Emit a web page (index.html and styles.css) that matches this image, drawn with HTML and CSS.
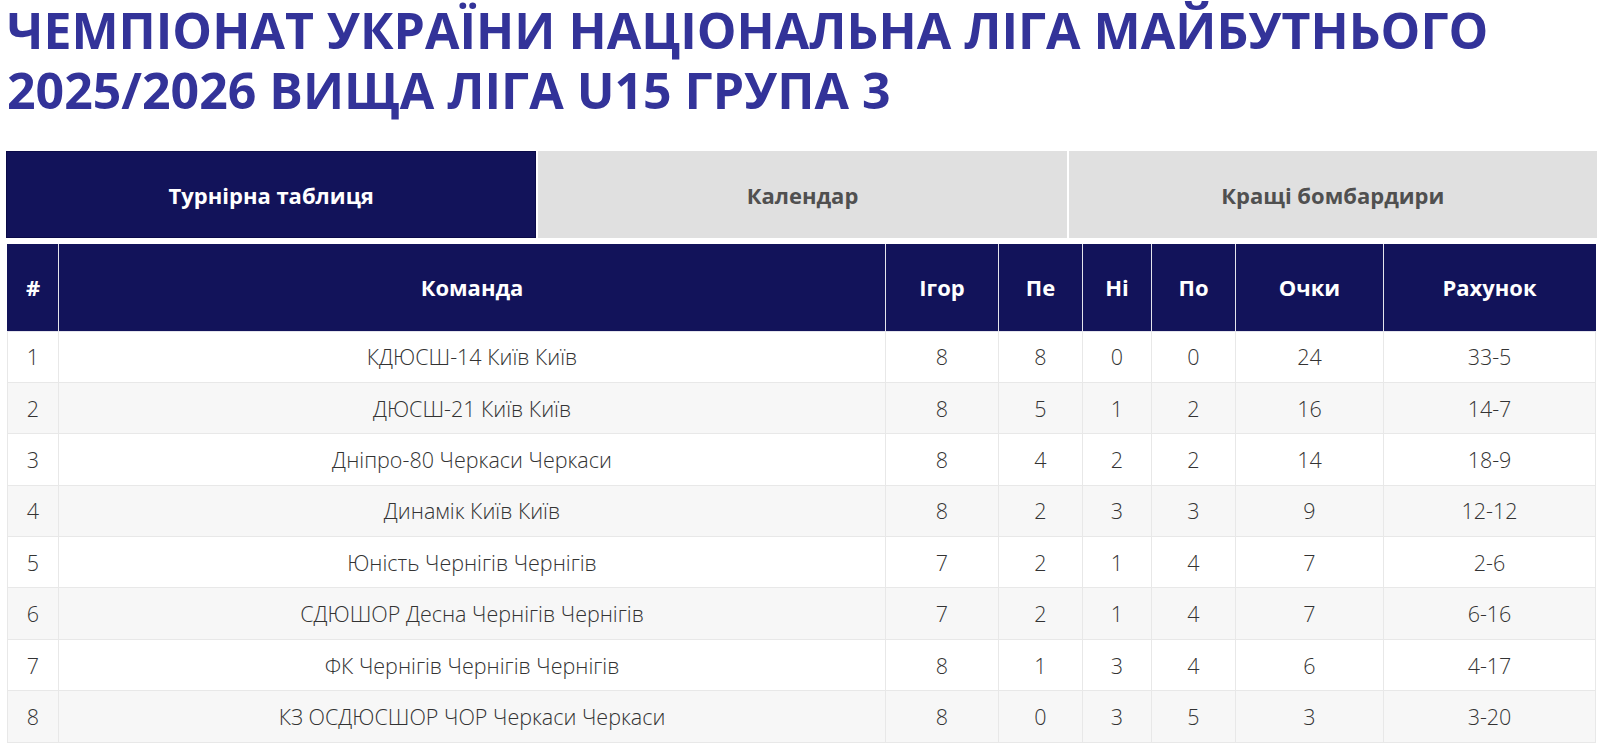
FILE: index.html
```html
<!DOCTYPE html>
<html lang="uk">
<head>
<meta charset="utf-8">
<title>Чемпіонат України</title>
<link rel="stylesheet" href="styles.css">
</head>
<body>
<div class="page">
  <h1 class="title">ЧЕМПІОНАТ УКРАЇНИ НАЦІОНАЛЬНА ЛІГА МАЙБУТНЬОГО 2025/2026 ВИЩА ЛІГА U15 ГРУПА 3</h1>
  <div class="tabs">
    <div class="tab active">Турнірна таблиця</div>
    <div class="tab">Календар</div>
    <div class="tab">Кращі бомбардири</div>
  </div>
  <table class="standings">
    <colgroup>
      <col class="c-pos"><col class="c-team"><col class="c-games"><col class="c-w"><col class="c-d"><col class="c-l"><col class="c-pts"><col class="c-score">
    </colgroup>
    <thead>
      <tr><th>#</th><th>Команда</th><th>Ігор</th><th>Пе</th><th>Ні</th><th>По</th><th>Очки</th><th>Рахунок</th></tr>
    </thead>
    <tbody>
      <tr><td>1</td><td>КДЮСШ-14 Київ Київ</td><td>8</td><td>8</td><td>0</td><td>0</td><td>24</td><td>33-5</td></tr>
      <tr><td>2</td><td>ДЮСШ-21 Київ Київ</td><td>8</td><td>5</td><td>1</td><td>2</td><td>16</td><td>14-7</td></tr>
      <tr><td>3</td><td>Дніпро-80 Черкаси Черкаси</td><td>8</td><td>4</td><td>2</td><td>2</td><td>14</td><td>18-9</td></tr>
      <tr><td>4</td><td>Динамік Київ Київ</td><td>8</td><td>2</td><td>3</td><td>3</td><td>9</td><td>12-12</td></tr>
      <tr><td>5</td><td>Юність Чернігів Чернігів</td><td>7</td><td>2</td><td>1</td><td>4</td><td>7</td><td>2-6</td></tr>
      <tr><td>6</td><td>СДЮШОР Десна Чернігів Чернігів</td><td>7</td><td>2</td><td>1</td><td>4</td><td>7</td><td>6-16</td></tr>
      <tr><td>7</td><td>ФК Чернігів Чернігів Чернігів</td><td>8</td><td>1</td><td>3</td><td>4</td><td>6</td><td>4-17</td></tr>
      <tr><td>8</td><td>КЗ ОСДЮСШОР ЧОР Черкаси Черкаси</td><td>8</td><td>0</td><td>3</td><td>5</td><td>3</td><td>3-20</td></tr>
    </tbody>
  </table>
</div>
</body>
</html>
```

FILE: styles.css
```css
* { box-sizing: border-box; }
html, body { margin: 0; padding: 0; background: #fff; }
body { font-family: "Open Sans", "Noto Sans", sans-serif; color: #333; }

.page {
  padding: 0 3px 0 6px;
}

.title {
  margin: 0 0 0 1px;
  font-size: 50px;
  line-height: 60px;
  font-weight: 700;
  color: #333399;
  letter-spacing: 0;
}

.tabs {
  display: flex;
  gap: 2px;
  margin-top: 31px;
}
.tab {
  flex: 1 1 0;
  height: 87px;
  display: flex;
  align-items: center;
  justify-content: center;
  background: #e0e0e0;
  color: #505050;
  font-size: 22px;
  font-weight: 700;
}
.tab.active {
  background: #12135a;
  color: #fff;
  border: 1px solid #0a0a48;
}

.standings {
  margin: 6px 0 0 1px;
  width: 1588px;
  table-layout: fixed;
  border-collapse: collapse;
}
.c-pos { width: 51px; }
.c-team { width: 827px; }
.c-games { width: 113px; }
.c-w { width: 84px; }
.c-d { width: 69px; }
.c-l { width: 84px; }
.c-pts { width: 148px; }
.c-score { width: 212px; }

.standings th {
  height: 87px;
  background: #12135a;
  color: #fff;
  font-size: 22px;
  font-weight: 700;
  text-align: center;
  border: 1px solid #e4e4ec;
  border-top: 0;
  padding: 0;
}
.standings th:first-child { border-left-color: #12135a; }
.standings th:last-child { border-right-color: #12135a; }

.standings td {
  height: 51.4px;
  padding: 0;
  text-align: center;
  font-size: 21.5px;
  font-weight: 300;
  color: #333;
  border: 1px solid #e8e8e8;
}
.standings tbody tr:nth-child(even) td { background: #f7f7f7; }
```
